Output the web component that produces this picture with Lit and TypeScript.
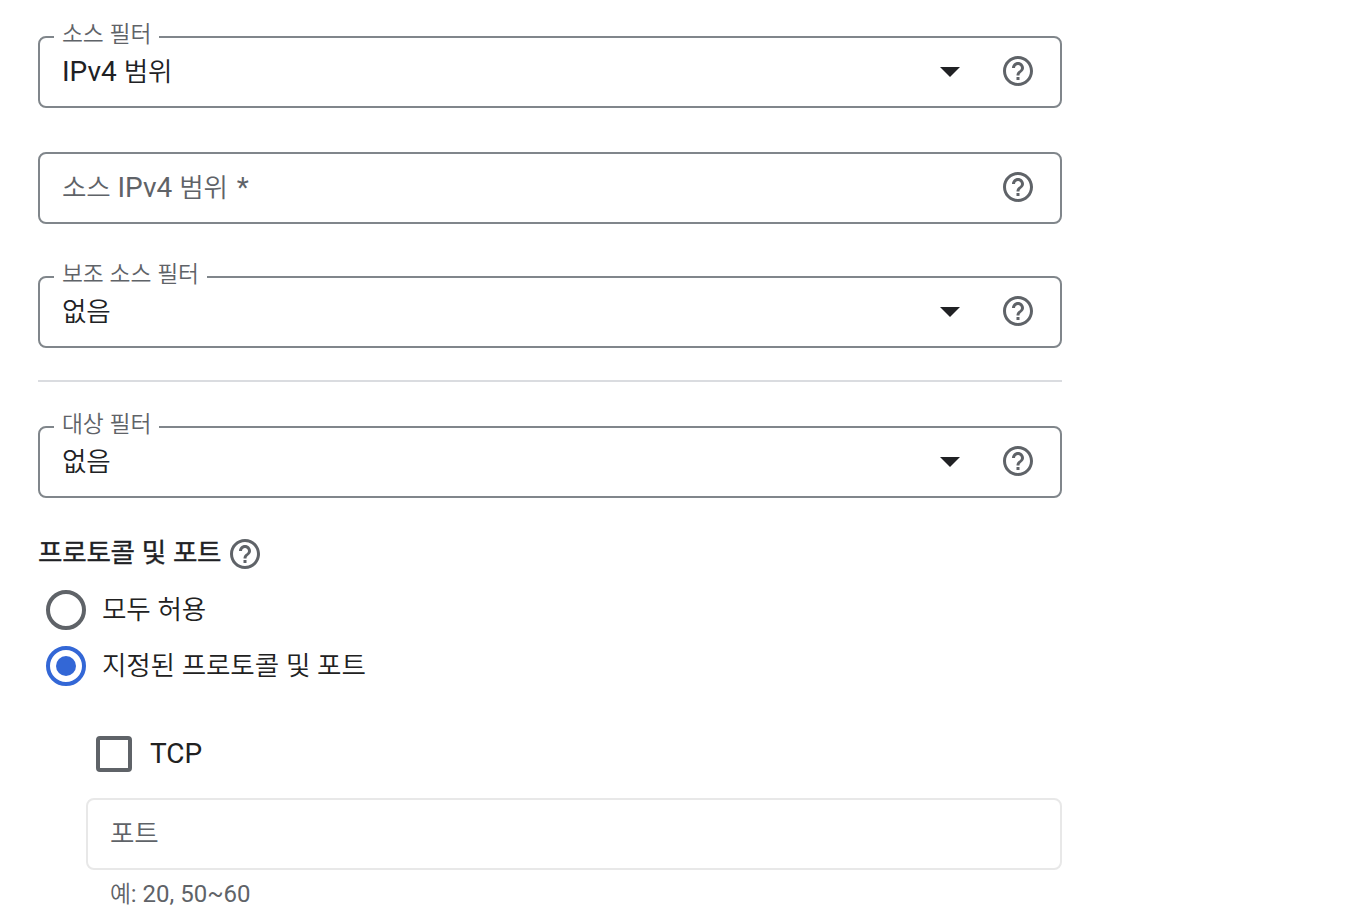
import { html, css, svg, LitElement, nothing } from "lit";
import { customElement, property } from "lit/decorators.js";

const HANGUL = /([\uac00-\ud7a3]+)/;

// Hangul runs get their own span so that they can be sized apart from Roboto
const mixed = (text: string) =>
   text.split(HANGUL).map((part) => (HANGUL.test(part) ? html`<span class="ko">${part}</span>` : part));

const textStyles = css`
   .ko {
      font-family: "Noto Sans CJK KR", sans-serif;
      font-size: 0.95em;
      letter-spacing: -0.007em;
      font-weight: 350;
      line-height: 1;
   }
`;

@customElement("help-icon")
export class HelpIcon extends LitElement {

   static styles = css`
      :host {
         display: block;
         width: 36px;
         height: 36px;
         color: #5f6368;
      }
      svg {
         display: block;
         fill: currentColor;
      }
   `;

   render() {
      return html`
         <svg width="36" height="36" viewBox="0 0 24 24">
            ${svg`<path d="M11 18h2v-2h-2v2zm1-16C6.48 2 2 6.48 2 12s4.48 10 10 10 10-4.48 10-10S17.52 2 12 2zm0 18c-4.41 0-8-3.59-8-8s3.59-8 8-8 8 3.59 8 8-3.59 8-8 8zm0-14c-2.21 0-4 1.79-4 4h2c0-1.1.9-2 2-2s2 .9 2 2c0 2-3 1.75-3 5h2c0-2.25 3-2.5 3-5 0-2.21-1.79-4-4-4z"/>`}
         </svg>
      `;
   }

}

@customElement("form-field")
export class FormField extends LitElement {

   @property() label = "";
   @property() value = "";
   @property() placeholder = "";
   @property({ type: Boolean }) help = false;
   @property({ type: Boolean }) required = false;
   @property({ type: Boolean, reflect: true }) disabled = false;

   static styles = [
      textStyles,
      css`
         :host {
            display: block;
         }
         .box {
            position: relative;
            box-sizing: border-box;
            display: flex;
            align-items: center;
            height: 72px;
            padding: 0 24px 2px 22px;
            border: 2px solid #80868b;
            border-radius: 8px;
         }
         :host([disabled]) .box {
            border-color: #e8e8e8;
         }
         .label {
            position: absolute;
            top: -18px;
            left: 14px;
            padding: 0 8px;
            background: #fff;
            color: #5f6368;
            font-size: 24px;
            line-height: 28px;
            white-space: nowrap;
         }
         .text {
            flex: 1;
            padding-top: 2px;
            color: #202124;
            font-size: 28px;
            line-height: 40px;
         }
         .placeholder {
            color: #5f6368;
         }
         .star {
            margin-left: 9px;
         }
         .caret {
            margin: 2px 40px 0 0;
            border: 10px solid transparent;
            border-top-color: #202124;
            border-bottom: 0;
         }
      `,
   ];

   render() {
      return html`
         <div class="box">
            ${this.label ? html`<span class="label">${mixed(this.label)}</span>` : nothing}
            ${this.value
               ? html`<span class="text">${mixed(this.value)}</span><span class="caret"></span>`
               : html`<span class="text placeholder">${mixed(this.placeholder)}${this.required ? html`<span class="star">*</span>` : nothing}</span>`}
            ${this.help ? html`<help-icon></help-icon>` : nothing}
         </div>
      `;
   }

}

@customElement("radio-option")
export class RadioOption extends LitElement {

   @property() label = "";
   @property({ type: Boolean, reflect: true }) checked = false;

   static styles = [
      textStyles,
      css`
         :host {
            display: flex;
            align-items: center;
            gap: 16px;
            height: 56px;
            padding-left: 8px;
         }
         .circle {
            box-sizing: border-box;
            display: flex;
            align-items: center;
            justify-content: center;
            width: 40px;
            height: 40px;
            border: 4px solid #5f6368;
            border-radius: 50%;
         }
         :host([checked]) .circle {
            border-color: #3367d6;
         }
         :host([checked]) .circle::after {
            content: "";
            width: 20px;
            height: 20px;
            border-radius: 50%;
            background: #3367d6;
         }
         .text {
            color: #212121;
            font-size: 28px;
            line-height: 40px;
         }
      `,
   ];

   render() {
      return html`
         <span class="circle"></span>
         <span class="text">${mixed(this.label)}</span>
      `;
   }

}

@customElement("app-root")
export class AppRoot extends LitElement {

   static styles = [
      textStyles,
      css`
         :host {
            display: block;
            box-sizing: border-box;
            width: 1346px;
            height: 910px;
            padding: 36px 284px 0 38px;
            overflow: hidden;
            background: #fff;
            color: #202124;
            font-family: Roboto, "Noto Sans CJK KR", sans-serif;
            font-size: 28px;
         }
         .source {
            display: flex;
            flex-direction: column;
            padding-bottom: 32px;
            border-bottom: 2px solid #dadce0;
         }
         .range {
            margin: 44px 0 52px;
         }
         .target {
            margin-top: 44px;
         }
         .heading {
            display: flex;
            align-items: center;
            gap: 6px;
            height: 36px;
            margin: 38px 0 10px;
         }
         .heading .title {
            padding-bottom: 2px;
            line-height: 36px;
         }
         .heading .ko {
            font-weight: 400;
            letter-spacing: -0.01em;
            -webkit-text-stroke: 0.35px currentColor;
         }
         .ports {
            padding: 42px 0 0 48px;
         }
         .check {
            display: flex;
            align-items: center;
            gap: 18px;
            height: 36px;
            padding-left: 10px;
            margin-bottom: 26px;
         }
         .square {
            box-sizing: border-box;
            width: 36px;
            height: 36px;
            border: 4px solid #5f6368;
            border-radius: 4px;
         }
         .tcp {
            padding-bottom: 1px;
            color: #212121;
         }
         .hint {
            padding-left: 24px;
            margin-top: 8px;
            color: #5f6368;
            font-size: 24px;
            line-height: 32px;
         }
      `,
   ];

   render() {
      return html`
         <section class="source">
            <form-field label="소스 필터" value="IPv4 범위" help></form-field>
            <form-field class="range" placeholder="소스 IPv4 범위" required help></form-field>
            <form-field label="보조 소스 필터" value="없음" help></form-field>
         </section>
         <form-field class="target" label="대상 필터" value="없음" help></form-field>
         <div class="heading">
            <span class="title">${mixed("프로토콜 및 포트")}</span>
            <help-icon></help-icon>
         </div>
         <radio-option label="모두 허용"></radio-option>
         <radio-option label="지정된 프로토콜 및 포트" checked></radio-option>
         <section class="ports">
            <div class="check">
               <span class="square"></span>
               <span class="tcp">TCP</span>
            </div>
            <form-field placeholder="포트" disabled></form-field>
            <div class="hint">${mixed("예: 20, 50~60")}</div>
         </section>
      `;
   }

}
